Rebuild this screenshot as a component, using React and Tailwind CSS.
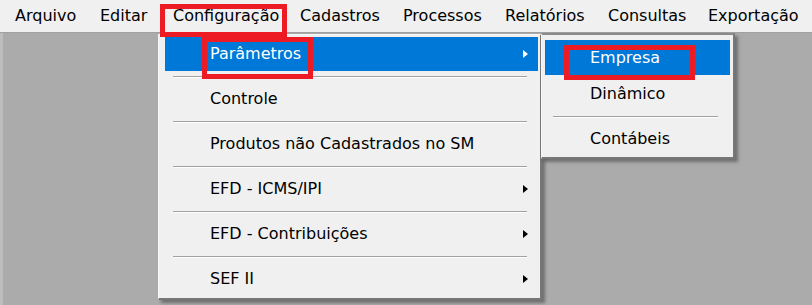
import React from "react";

const menuBar = [
  { label: "Arquivo", w: "w-[85px]" },
  { label: "Editar", w: "w-[73px]" },
  { label: "Configuração", w: "w-[127px]" },
  { label: "Cadastros", w: "w-[103px]" },
  { label: "Processos", w: "w-[102px]" },
  { label: "Relatórios", w: "w-[103px]" },
  { label: "Consultas", w: "w-[100px]" },
  { label: "Exportação", w: "w-[100px]" },
];

const configItems = [
  { label: "Parâmetros", sub: true, active: true },
  { label: "Controle" },
  { label: "Produtos não Cadastrados no SM" },
  { label: "EFD - ICMS/IPI", sub: true },
  { label: "EFD - Contribuições", sub: true },
  { label: "SEF II", sub: true },
];

function Arrow({ white }) {
  return (
    <span
      className={
        "w-0 h-0 border-y-[4px] border-y-transparent border-l-[5px] " +
        (white ? "border-l-white" : "border-l-black")
      }
    />
  );
}

function Separator({ className }) {
  return (
    <div className={"flex items-center " + className}>
      <div className="flex-1 h-[2px] border-t border-[#a0a0a0] border-b border-b-white" />
    </div>
  );
}

export default function App() {
  return (
    <div className="relative w-[812px] h-[305px] overflow-hidden bg-[#ababab] font-['DejaVu_Sans',sans-serif] text-[16px] text-black">
      {/* barra de menus */}
      <div className="flex items-center h-[33px] pl-[3px] bg-[#f0f0f0] border-b border-[#a0a0a0]">
        {menuBar.map((m) => (
          <div key={m.label} className={"pl-[12px] whitespace-nowrap " + m.w}>
            {m.label}
          </div>
        ))}
      </div>
      <div className="h-[272px] border-l-[3px] border-[#bdbdbd]" />

      {/* menu Configuração */}
      <div className="absolute left-[158px] top-[34px] w-[384px] flex flex-col bg-[#f0f0f0] border-t border-l border-[#f7f7f7] border-r-2 border-b-2 border-r-[#777] border-b-[#777] pt-[2px] pb-[2px] pl-[6px] pr-[2px] shadow-[3px_3px_3px_rgba(0,0,0,0.35)]">
        {configItems.map((it, i) => (
          <React.Fragment key={it.label}>
            {i > 0 && <Separator className="h-[11px] ml-[8px] mr-[11px]" />}
            <div
              className={
                "h-[34px] flex items-center justify-between pl-[45px] pr-[10px] whitespace-nowrap " +
                (it.active ? "bg-[#0078d7] text-white" : "")
              }
            >
              <span>{it.label}</span>
              {it.sub && <Arrow white={it.active} />}
            </div>
          </React.Fragment>
        ))}
      </div>

      {/* submenu Parâmetros */}
      <div className="absolute left-[541px] top-[33px] w-[194px] flex flex-col bg-[#f0f0f0] border-t-2 border-t-[#8a8a8a] border-l border-l-[#f7f7f7] border-r-2 border-b-2 border-r-[#777] border-b-[#777] pt-[5px] pl-[3px] pr-[3px] shadow-[3px_3px_3px_rgba(0,0,0,0.35)]">
        <div className="h-[35px] flex items-center pl-[45px] bg-[#0078d7] text-white">Empresa</div>
        <div className="h-[37px] flex items-center pl-[45px]">Dinâmico</div>
        <Separator className="h-[9px] ml-[8px] mr-[12px]" />
        <div className="h-[36px] flex items-center pl-[45px]">Contábeis</div>
      </div>

      {/* destaques em vermelho */}
      <div className="absolute left-[160px] top-[4px] w-[127px] h-[33px] border-[5px] border-[#ed1c24]" />
      <div className="absolute left-[202px] top-[37px] w-[111px] h-[42px] border-[5px] border-[#ed1c24]" />
      <div className="absolute left-[564px] top-[45px] w-[131px] h-[35px] border-[5px] border-[#ed1c24]" />
    </div>
  );
}
